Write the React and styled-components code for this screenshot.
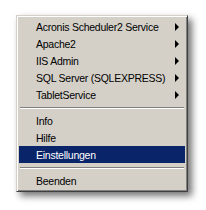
import React from 'react';
import styled, {createGlobalStyle} from 'styled-components';

const Global = createGlobalStyle`
    html, body {
        margin: 0;
        padding: 0;
        background: #ffffff;
    }
`
const Page = styled.div`
    width: 206px;
    height: 210px;
    padding: 15px 0 0 16px;
    box-sizing: border-box;
`
const Menu = styled.div`
    width: 172px;
    box-sizing: border-box;
    background: #d4d0c8;
    border: 1px solid;
    border-color: #d4d0c8 #404040 #404040 #d4d0c8;
    box-shadow: inset 1px 1px 0 #ffffff, inset -1px -1px 0 #808080, 4px 4px 7px rgba(0, 0, 0, 0.55);
    padding: 2px;
    font-family: "Liberation Sans", Arial, sans-serif;
    font-size: 10.5px;
    letter-spacing: -0.25px;
    color: #000000;
`
const Item = styled.div`
    height: 17px;
    display: flex;
    align-items: center;
    padding-left: 17px;
    padding-right: 6px;
    background: ${p => p.active ? '#0a246a' : 'transparent'};
    color: ${p => p.active ? '#ffffff' : '#000000'};
`
const Label = styled.span`
    flex: 1;
    white-space: nowrap;
`
const Arrow = styled.span`
    width: 0;
    height: 0;
    border-top: 4px solid transparent;
    border-bottom: 4px solid transparent;
    border-left: 4px solid #000000;
`
const Separator = styled.div`
    height: 9px;
    display: flex;
    align-items: center;
    padding: 0 1px;
    &::after {
        content: '';
        flex: 1;
        height: 0;
        border-top: 1px solid #808080;
        border-bottom: 1px solid #ffffff;
    }
`

const services = ['Acronis Scheduler2 Service', 'Apache2', 'IIS Admin', 'SQL Server (SQLEXPRESS)', 'TabletService'];

export default function App() {
    return (
        <Page>
            <Global />
            <Menu>
                {services.map(s => (
                    <Item key={s}>
                        <Label>{s}</Label>
                        <Arrow />
                    </Item>
                ))}
                <Separator />
                <Item><Label>Info</Label></Item>
                <Item><Label>Hilfe</Label></Item>
                <Item active><Label>Einstellungen</Label></Item>
                <Separator />
                <Item><Label>Beenden</Label></Item>
            </Menu>
        </Page>
    )
}
